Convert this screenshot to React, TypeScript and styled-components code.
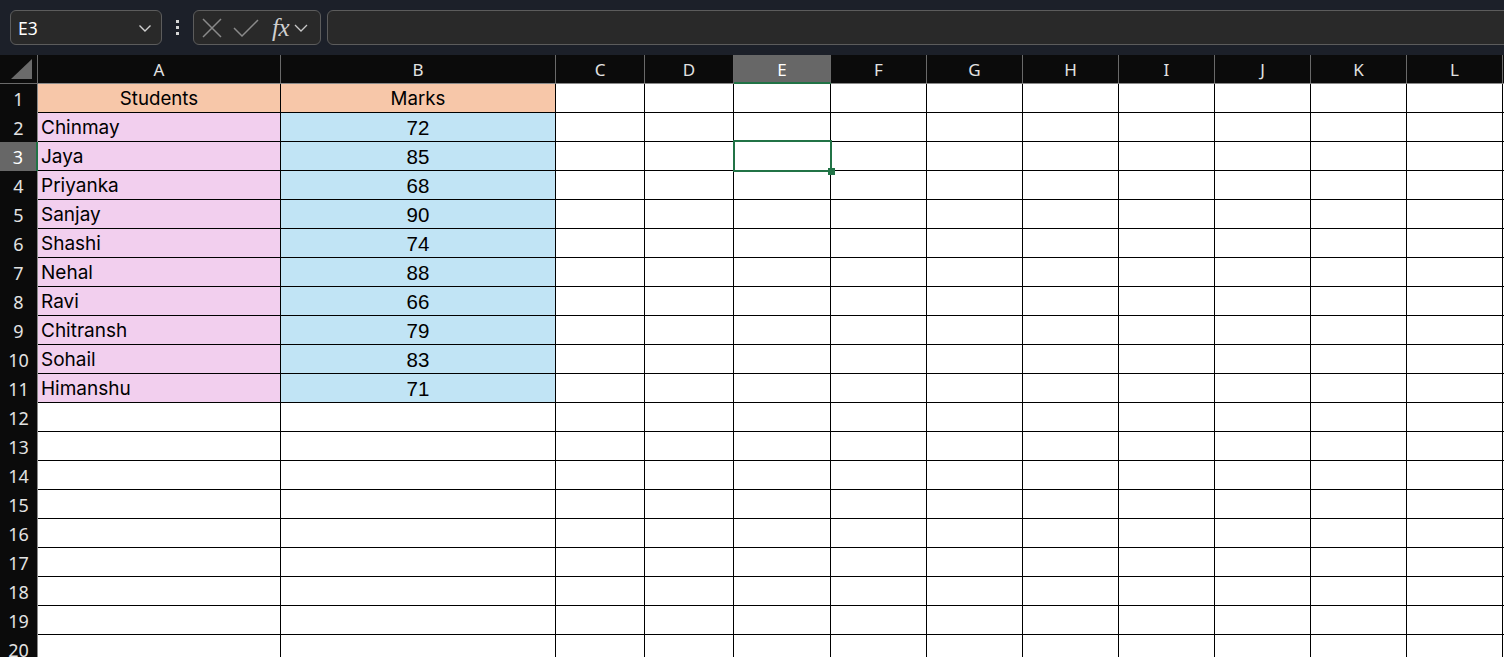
import React from 'react';
import styled, { createGlobalStyle } from 'styled-components';

const GlobalStyle = createGlobalStyle`
  html, body {
    margin: 0;
    padding: 0;
    background: #0b0b0b;
    overflow: hidden;
  }
  * {
    box-sizing: border-box;
  }
`;

const columns = ['A', 'B', 'C', 'D', 'E', 'F', 'G', 'H', 'I', 'J', 'K', 'L', 'M'];
const colWidths = [38, 243, 275, 89, 89, 97, 96, 96, 96, 96, 96, 96, 96, 96];

const students: { name: string; marks: number }[] = [
  { name: 'Chinmay', marks: 72 },
  { name: 'Jaya', marks: 85 },
  { name: 'Priyanka', marks: 68 },
  { name: 'Sanjay', marks: 90 },
  { name: 'Shashi', marks: 74 },
  { name: 'Nehal', marks: 88 },
  { name: 'Ravi', marks: 66 },
  { name: 'Chitransh', marks: 79 },
  { name: 'Sohail', marks: 83 },
  { name: 'Himanshu', marks: 71 },
];

const App: React.FC = () => {
  const rows = Array.from({ length: 20 }, (_, i) => i + 1);

  const renderCell = (row: number, col: string) => {
    const active = row === 3 && col === 'E';
    if (row === 1 && (col === 'A' || col === 'B')) {
      return (
        <Cell key={col} $bg="#f7c7a9" $align="center">
          <HeadText>{col === 'A' ? 'Students' : 'Marks'}</HeadText>
        </Cell>
      );
    }
    const s = students[row - 2];
    if (s && col === 'A') {
      return (
        <Cell key={col} $bg="#f2cfee" $align="flex-start">
          <NameText>{s.name}</NameText>
        </Cell>
      );
    }
    if (s && col === 'B') {
      return (
        <Cell key={col} $bg="#c1e4f5" $align="center">
          <NumText>{s.marks}</NumText>
        </Cell>
      );
    }
    return (
      <Cell key={col} $bg="#ffffff" $align="center">
        {active && (
          <ActiveBox>
            <FillHandle />
          </ActiveBox>
        )}
      </Cell>
    );
  };

  return (
    <Page>
      <GlobalStyle />
      <Toolbar>
        <NameBox>
          <span>E3</span>
          <svg width="16" height="16" viewBox="0 0 16 16" fill="none">
            <path d="M2.5 5.5l5.5 5.5 5.5-5.5" stroke="#d0d0d0" strokeWidth="1.4" />
          </svg>
        </NameBox>
        <Dots>
          <i />
          <i />
          <i />
        </Dots>
        <FormulaTools>
          <svg width="22" height="22" viewBox="0 0 22 22" fill="none">
            <path d="M2 2l18 18M20 2L2 20" stroke="#8a8a8a" strokeWidth="1.5" />
          </svg>
          <svg width="26" height="20" viewBox="0 0 26 20" fill="none">
            <path d="M1 10l8 8L25 2" stroke="#8a8a8a" strokeWidth="1.5" />
          </svg>
          <Fx>fx</Fx>
          <svg width="16" height="16" viewBox="0 0 16 16" fill="none">
            <path d="M2 5l6 6 6-6" stroke="#c8c8c8" strokeWidth="1.3" />
          </svg>
        </FormulaTools>
        <FormulaInput />
      </Toolbar>

      <Sheet>
        <Corner>
          <svg width="24" height="22" viewBox="0 0 24 22">
            <polygon points="22,1 22,21 1,21" fill="#6b6b6b" />
          </svg>
        </Corner>
        {columns.map((c) => (
          <ColHeader key={c} $selected={c === 'E'}>
            {c}
          </ColHeader>
        ))}
        {rows.map((r) => (
          <React.Fragment key={r}>
            <RowHeader $selected={r === 3}>{r}</RowHeader>
            {columns.map((c) => renderCell(r, c))}
          </React.Fragment>
        ))}
      </Sheet>
    </Page>
  );
};

const Page = styled.div`
  width: 1504px;
  height: 657px;
  overflow: hidden;
  display: flex;
  flex-direction: column;
  background: #0b0b0b;
`;

const Toolbar = styled.div`
  height: 55px;
  flex-shrink: 0;
  display: flex;
  align-items: flex-start;
  padding: 10px 0 0 10px;
  background: #1c2029;
`;

const NameBox = styled.div`
  width: 152px;
  height: 35px;
  display: flex;
  align-items: center;
  justify-content: space-between;
  padding: 0 8px 0 7px;
  border: 1px solid #5c5c5c;
  border-radius: 6px;
  background: #292929;
  color: #ffffff;
  font-family: 'Noto Sans', 'Liberation Sans', sans-serif;
  font-size: 17.5px;
`;

const Dots = styled.div`
  width: 31px;
  height: 35px;
  display: flex;
  flex-direction: column;
  align-items: center;
  justify-content: center;
  gap: 3px;
  i {
    display: block;
    width: 3px;
    height: 3px;
    background: #d6d6d6;
  }
`;

const FormulaTools = styled.div`
  width: 128px;
  height: 35px;
  display: flex;
  align-items: center;
  gap: 10px;
  padding: 0 3px 0 7px;
  border: 1px solid #5c5c5c;
  border-radius: 6px;
  background: #292929;
`;

const Fx = styled.span`
  font-family: 'Liberation Serif', 'DejaVu Serif', serif;
  font-style: italic;
  font-size: 25px;
  line-height: 25px;
  color: #cfcfcf;
  margin-left: 3px;
  margin-right: -6px;
  letter-spacing: -0.5px;
`;

const FormulaInput = styled.div`
  flex: 1;
  height: 35px;
  margin-left: 6px;
  margin-right: -10px;
  border: 1px solid #5c5c5c;
  border-radius: 6px;
  background: #292929;
`;

const Sheet = styled.div`
  display: grid;
  grid-template-columns: ${colWidths.map((w) => `${w}px`).join(' ')};
  grid-auto-rows: 29px;
  font-family: 'Noto Sans', 'Liberation Sans', sans-serif;
`;

const Corner = styled.div`
  display: flex;
  align-items: flex-end;
  justify-content: flex-end;
  padding: 0 3px 3px 0;
  background: #0b0b0b;
  border-right: 1px solid #6a6a6a;
  border-bottom: 1px solid #6a6a6a;
`;

const ColHeader = styled.div<{ $selected: boolean }>`
  display: flex;
  align-items: center;
  justify-content: center;
  background: ${(p) => (p.$selected ? '#676767' : '#0b0b0b')};
  color: ${(p) => (p.$selected ? '#ffffff' : '#e2e2e2')};
  font-size: 17px;
  border-right: 1px solid #6a6a6a;
  border-bottom: ${(p) => (p.$selected ? '2px solid #217346' : '1px solid #8a8a8a')};
  padding-top: 1px;
`;

const RowHeader = styled.div<{ $selected: boolean }>`
  display: flex;
  align-items: center;
  justify-content: center;
  background: ${(p) => (p.$selected ? '#676767' : '#0b0b0b')};
  color: ${(p) => (p.$selected ? '#ffffff' : '#e2e2e2')};
  font-size: 18px;
  border-right: ${(p) => (p.$selected ? '2px solid #217346' : '1px solid #8a8a8a')};
  padding-top: 1px;
`;

const Cell = styled.div<{ $bg: string; $align: string }>`
  position: relative;
  display: flex;
  align-items: flex-end;
  justify-content: ${(p) => p.$align};
  padding: 0 3px 1px 3px;
  background: ${(p) => p.$bg};
  border-right: 1px solid #000000;
  border-bottom: 1px solid #000000;
  color: #000000;
`;

const HeadText = styled.span`
  font-family: 'Inter', 'Roboto', sans-serif;
  font-size: 18.7px;
  line-height: 25px;
`;

const NameText = styled.span`
  font-family: 'Inter', 'Roboto', sans-serif;
  font-size: 19px;
  line-height: 25px;
`;

const NumText = styled.span`
  font-family: 'Liberation Sans', Arial, sans-serif;
  font-size: 20.5px;
  line-height: 25px;
`;

const ActiveBox = styled.div`
  position: absolute;
  z-index: 2;
  top: -2px;
  left: -1px;
  right: -2px;
  bottom: -2px;
  border: 2px solid #217346;
  pointer-events: none;
`;

const FillHandle = styled.div`
  position: absolute;
  right: -5px;
  bottom: -5px;
  width: 7px;
  height: 7px;
  background: #217346;
`;

export default App;
